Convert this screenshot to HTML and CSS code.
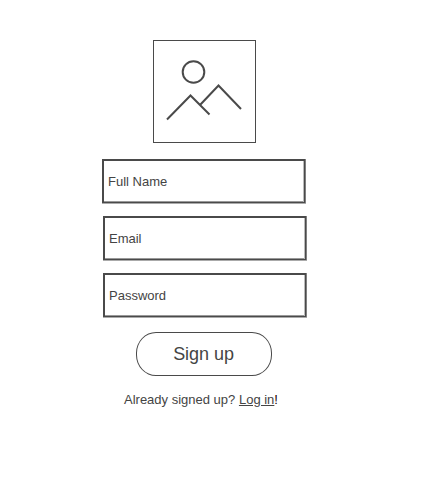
FILE: index.html
```html
<!DOCTYPE html>
<html lang="en">
<head>
<meta charset="utf-8">
<title>Sign up</title>
<link rel="stylesheet" href="styles.css">
</head>
<body>
<main class="signup">
  <svg class="picture" viewBox="0 0 103 103" aria-hidden="true">
    <rect class="frame" x=".5" y=".5" width="102" height="102"/>
    <circle cx="40.5" cy="32" r="10.8"/>
    <path d="M14 79.5 37.5 55.5 56.5 74.5M47 65 65.5 45.5 88 69"/>
  </svg>
  <form class="form">
    <label class="field field-name">Full Name</label>
    <label class="field">Email</label>
    <label class="field">Password</label>
    <button class="submit" type="button">Sign up</button>
  </form>
  <p class="login">Already signed up? <a href="#">Log in</a><span class="mark">!</span></p>
</main>
</body>
</html>
```
FILE: styles.css
```css
* { box-sizing: border-box; }
body {
  margin: 0;
  background: #fff;
  color: #444;
  font: 13px/16px "Liberation Sans", Arial, sans-serif;
}
.signup {
  width: 204px;
  margin-left: 103px;
  padding-top: 40px;
}
.picture {
  display: block;
  width: 103px;
  height: 103px;
  margin-left: 50px;
  fill: none;
  stroke: #4a4a4a;
  stroke-width: 2;
}
.frame { stroke-width: 1; }
.form {
  display: flex;
  flex-direction: column;
  gap: 13px;
  margin-top: 16px;
}
.field {
  display: flex;
  align-items: center;
  width: 203px;
  height: 44px;
  padding: 1px 0 0 4px;
  border: solid #4a4a4a;
  border-width: 2px 1px 1px 2px;
  box-shadow:
    inset -1px 0 #bbb,
    inset 0 -1px #999,
    1px 0 #808080,
    0 1px #aaa,
    1px 1px #aaa;
}
.field-name { margin-left: -1px; }
.submit {
  width: 136px;
  height: 44px;
  margin: 2px 0 0 33px;
  padding: 0 1px 0 0;
  border: 1px solid #4a4a4a;
  border-radius: 20px / 21px;
  background: #fff;
  color: #444;
  font: 18px/20px "Liberation Sans", Arial, sans-serif;
  letter-spacing: -.05px;
}
.login {
  margin: 16px 0 0 21px;
  white-space: nowrap;
}
.login a { color: inherit; }
.mark { color: #200; }
```
